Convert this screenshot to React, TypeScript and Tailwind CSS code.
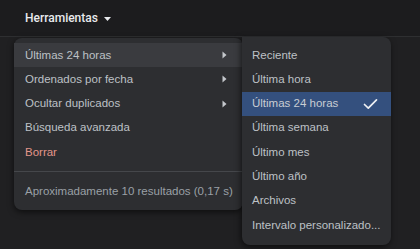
import React from "react";

const Arrow = () => (
  <svg width="5" height="8" viewBox="0 0 5 8" className="block">
    <path d="M0.5 0.5 L4.5 4 L0.5 7.5 Z" fill="#c4c7cc" />
  </svg>
);

const Check = () => (
  <svg width="15" height="12" viewBox="0 0 15 12" className="block">
    <path d="M1.5 6.5 L5.3 10.2 L13.5 1.8" fill="none" stroke="#eef0f3" strokeWidth="1.7" strokeLinecap="round" strokeLinejoin="round" />
  </svg>
);

export default function App() {
  const main = [
    { t: "Últimas 24 horas", arrow: true, hover: true },
    { t: "Ordenados por fecha", arrow: true },
    { t: "Ocultar duplicados", arrow: true },
    { t: "Búsqueda avanzada" },
    { t: "Borrar", red: true },
  ];
  const sub = [
    "Reciente",
    "Última hora",
    "Últimas 24 horas",
    "Última semana",
    "Último mes",
    "Último año",
    "Archivos",
    "Intervalo personalizado...",
  ];
  return (
    <div
      className="relative w-[420px] h-[249px] overflow-hidden bg-[#202022] text-[11.5px]"
      style={{ fontFamily: "'Liberation Sans', Arial, sans-serif" }}
    >
      <div className="h-[37px] bg-[#1c1c1e] border-b border-[#2e2f31] flex items-center pl-[25px]">
        <span
          className="text-[#e8eaed] font-medium text-[12px]"
          style={{ fontFamily: "Roboto, 'Liberation Sans', sans-serif" }}
        >
          Herramientas
        </span>
        <svg width="7" height="4" viewBox="0 0 7 4" className="ml-[6px] mt-[1px]">
          <path d="M0 0 L7 0 L3.5 4 Z" fill="#e8eaed" />
        </svg>
      </div>

      <div className="absolute left-[14px] top-[38px] w-[229px] h-[172px] rounded-lg bg-[#2d2e31] shadow-[0_2px_6px_rgba(0,0,0,0.6)] pt-[5px] flex flex-col">
        {main.map((m) => (
          <div
            key={m.t}
            className={`h-[24.3px] flex items-center justify-between pl-[11px] pr-[16px] ${
              m.hover ? "bg-[#3a3b3f]" : ""
            } ${m.red ? "text-[#e3968a]" : "text-[#bdc1c6]"}`}
          >
            <span>{m.t}</span>
            {m.arrow && <Arrow />}
          </div>
        ))}
        <div className="mt-[7px] border-t border-[#45474b]" />
        <div className="flex-1 flex items-center pl-[11px] text-[#9aa0a6] whitespace-nowrap">
          Aproximadamente 10 resultados (0,17 s)
        </div>
      </div>

      <div className="absolute left-[242px] top-[37px] w-[149px] h-[208px] rounded-lg rounded-tl-none bg-[#2d2e31] shadow-[-1px_2px_6px_rgba(0,0,0,0.6)] pt-[6px]">
        {sub.map((s, i) => (
          <div
            key={s}
            className={`h-[24.3px] flex items-center justify-between pl-[10px] pr-[13px] ${
              i === 2 ? "bg-[#34507e] text-[#c9cdd3]" : "text-[#bdc1c6]"
            }`}
          >
            <span className="whitespace-nowrap">{s}</span>
            {i === 2 && <Check />}
          </div>
        ))}
      </div>
    </div>
  );
}
